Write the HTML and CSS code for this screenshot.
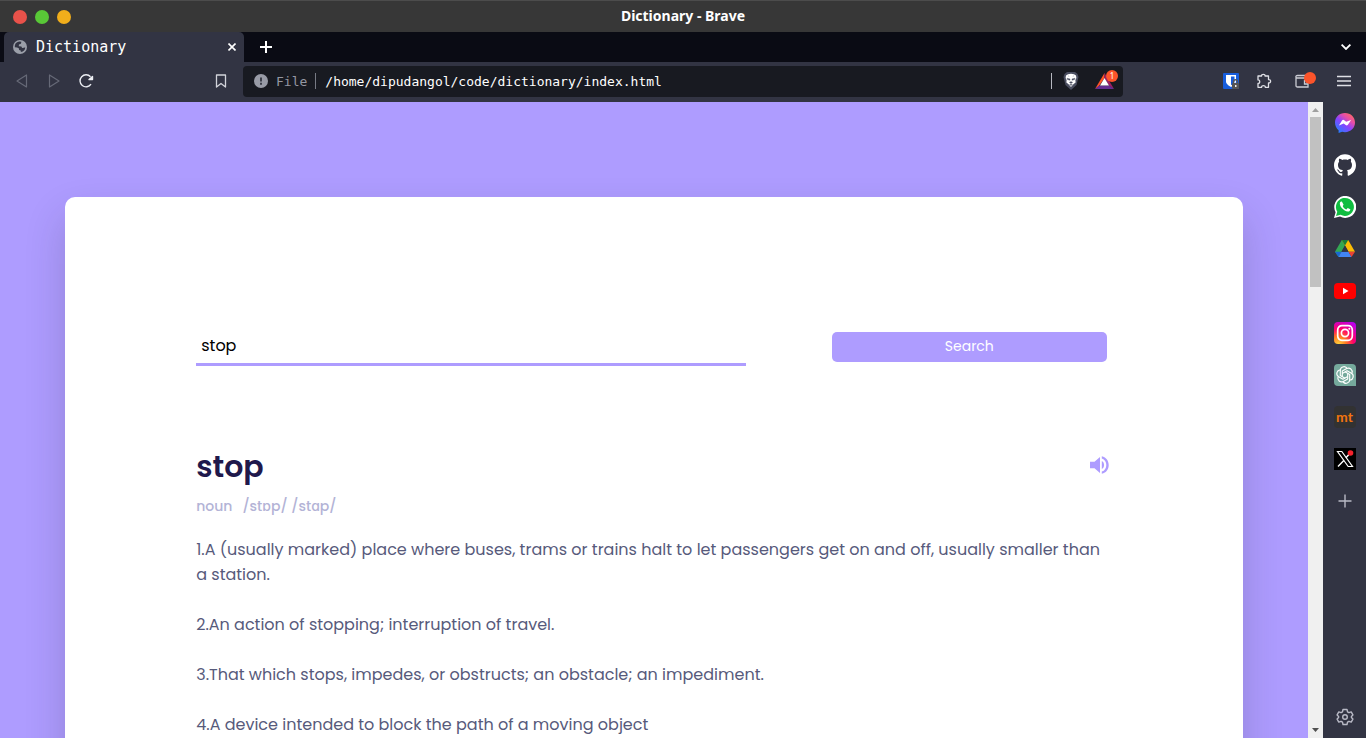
FILE: index.html
```html
<!DOCTYPE html>
<html lang="en">
<head>
<meta charset="utf-8">
<title>Dictionary</title>
<link rel="stylesheet" href="styles.css">
</head>
<body>
<header class="titlebar">
  <div class="lights">
    <button class="light light-red" aria-label="Close window"></button>
    <button class="light light-green" aria-label="Maximize window"></button>
    <button class="light light-amber" aria-label="Minimize window"></button>
  </div>
  <span class="window-title">Dictionary - Brave</span>
</header>

<div class="tabstrip">
  <div class="tab">
    <svg class="tab-icon" viewBox="0 0 16 16"><circle cx="8" cy="8" r="8" fill="#9b9fa9"/><path d="M7 1.8 9.6 2 9 4.2 6.8 5.2 6.6 7 9.6 7.4 10.4 9.2 12.6 8.8 14 8.2A6 6 0 0 1 9 13.8L8.8 12 7 11.4 6.6 9.4 4.6 8.6 2 8.2A6.200 6.200 0 0 1 7 1.800Z" fill="#323443"/></svg>
    <span class="tab-title">Dictionary</span>
    <button class="icon-button tab-close" aria-label="Close tab"><svg width="8" height="8" viewBox="0 0 8 8" fill="none" stroke="#fff" stroke-width="1.600"><path d="M.5.5l7 7M7.500.5l-7 7"/></svg></button>
  </div>
  <button class="icon-button new-tab" aria-label="New tab"><svg width="12" height="12" viewBox="0 0 12 12" stroke="#fff" stroke-width="2"><path d="M6 0v12M0 6h12"/></svg></button>
  <button class="icon-button tab-search" aria-label="Search tabs"><svg width="10" height="6" viewBox="0 0 10 6" fill="none" stroke="#fff" stroke-width="1.800"><path d="M.6.6 5 5 9.400.6"/></svg></button>
</div>

<nav class="toolbar">
  <div class="nav-group">
    <button class="icon-button" aria-label="Back"><svg width="12" height="14" viewBox="0 0 12 14" fill="none" stroke="#666977" stroke-width="1.200" stroke-linejoin="round"><path d="M10.500 1v12L1 7z"/></svg></button>
    <button class="icon-button" aria-label="Forward"><svg width="12" height="14" viewBox="0 0 12 14" fill="none" stroke="#666977" stroke-width="1.200" stroke-linejoin="round"><path d="M1.500 1v12L11 7z"/></svg></button>
    <button class="icon-button" aria-label="Reload"><svg width="16" height="16" viewBox="0 0 16 16" fill="none" stroke="#eceef3" stroke-width="1.400"><path d="M12.500 3.800A6 6 0 1 0 13 11.200"/><path d="M11 6.500h3.500V3.500z" fill="#eceef3" stroke-linejoin="round"/></svg></button>
  </div>
  <button class="icon-button bookmark" aria-label="Bookmark this page"><svg width="12" height="14" viewBox="0 0 12 14" fill="none" stroke="#d2d3da" stroke-width="1.300" stroke-linejoin="round"><path d="M1.500 1h9v12L6 9.500 1.500 13z"/></svg></button>
  <div class="omnibox">
    <svg width="14" height="14" viewBox="0 0 14 14"><circle cx="7" cy="7" r="7" fill="#989ba6"/><path d="M6 3.500h2v4H6zM6 8.800h2v2H6z" fill="#3b3e49"/></svg>
    <span class="scheme">File</span>
    <span class="divider scheme-divider"></span>
    <input class="address" type="text" aria-label="Address" value="/home/dipudangol/code/dictionary/index.html">
    <span class="divider"></span>
    <button class="icon-button shield" aria-label="Shields"><svg width="16" height="18" viewBox="0 0 16 18"><path d="M4 0h8l2.500 2L15.500 5 13.500 13 8 18 2.500 13 .5 5 1.500 2z" fill="#4a4e60"/><path d="M5 2.200 8 1.800l3 .4 2 1.400.4 2.400-1 2 .2 2.400-2.200 1.800L8 15l-2.400-2.800-2.200-1.800.2-2.400-1-2L3 3.600z" fill="#fff"/><path d="M4 6.200l3 .7v1.300L4.500 7.600zM12 6.200l-3 .7v1.300l2.500-.6zM6.400 10.400 8 9.600l1.600.8L8 11.600zM5.200 3.900l1 .5M10.800 3.900l-1 .5M6.600 12.500h2.800L8 13.600z" fill="#4a4e60" stroke="#4a4e60" stroke-width=".4"/></svg></button>
    <button class="icon-button rewards" aria-label="Rewards"><svg width="20" height="16" viewBox="0 0 20 16"><path d="M9.500 0 0 16 4 13 9.500 5z" fill="#ff5226"/><path d="M9.500 0 19 16 14 12.500 9.500 5z" fill="#9e1f63"/><path d="M0 16h19l-4.500-3.500H4.300z" fill="#662d91"/><path d="M9.500 5 14 12.500H5z" fill="#fff"/></svg><span class="badge">1</span></button>
  </div>
  <div class="extensions">
    <button class="icon-button" aria-label="Bitwarden"><svg width="16" height="16" viewBox="0 0 16 16"><rect width="16" height="16" rx="1" fill="#175ddc"/><path d="M3 2h10v6.500c0 2.500-3 4.400-5 5.500-2-1.100-5-3-5-5.500z" fill="#fff"/><path d="M8 3.500h3.500v5c0 1.500-1.500 2.700-3.500 3.800z" fill="#175ddc"/><rect x="9" y="10" width="7" height="6" rx="1" fill="#555"/><path d="M10.500 10V8.800a2 2 0 0 1 4 0V10" fill="none" stroke="#555" stroke-width="1.400"/><path d="M12 12h1.500v2H12z" fill="#eee"/></svg></button>
    <button class="icon-button" aria-label="Extensions"><svg width="16" height="16" viewBox="0 0 16 16" fill="none" stroke="#dfe0e6" stroke-width="1.300" stroke-linejoin="round"><path d="M2 3h3.600C5 .8 9.600.8 9 3h3.500v3.600c2.800-.6 2.800 3.800 0 3.300V14.300H9.300C9.600 12 5.300 12 5.600 14.300H2V10.500c2.300.3 2.300-4 0-3.700z"/></svg></button>
    <button class="icon-button wallet" aria-label="Wallet"><svg width="16" height="14" viewBox="0 0 16 14" fill="none" stroke="#cbccd4" stroke-width="1.300"><path d="M12 1.500H2.500C0 1.500.700 4 2.500 4H13v9H2.500Q1 13 1 11.500v-9M13 6.500H9.500v3.500H13"/></svg><span class="dot"></span></button>
    <button class="icon-button" aria-label="Menu"><svg width="14" height="12" viewBox="0 0 14 12" stroke="#dfe0e6" stroke-width="1.400"><path d="M0 1.500h14M0 6h14M0 10.500h14"/></svg></button>
  </div>
</nav>

<div class="workspace">
  <main class="page">
    <section class="card">
      <form class="search">
        <input class="word-input" type="text" aria-label="Word" value="stop">
        <button class="search-button" type="button">Search</button>
      </form>
      <div class="word-row">
        <h1 class="word">stop</h1>
        <button class="icon-button speaker" aria-label="Play pronunciation"><svg width="20" height="18" viewBox="0 0 20 18" fill="#ae9cff"><path d="M0 5.800h4.500L10 1v16l-5.500-4.800H0z"/><path d="M11.800 5c3 1.300 3 6.700 0 8z"/><path d="M11.800.2c9.200 1.800 9.200 15.800 0 17.600v-2.200c6-1.600 6-11.600 0-13.200z"/></svg></button>
      </div>
      <div class="details"><span>noun</span><span>/stɒp/ /stɑp/</span></div>
      <div class="meanings">
        <p>1.A (usually marked) place where buses, trams or trains halt to let passengers get on and off, usually smaller than a station.</p>
        <p>2.An action of stopping; interruption of travel.</p>
        <p>3.That which stops, impedes, or obstructs; an obstacle; an impediment.</p>
        <p>4.A device intended to block the path of a moving object</p>
      </div>
    </section>
  </main>
  <div class="scrollbar">
    <svg width="7" height="4" viewBox="0 0 7 4"><path d="M0 4 3.500 0 7 4z" fill="#a0a0a0"/></svg>
    <div class="track"><div class="thumb"></div></div>
    <svg width="7" height="4" viewBox="0 0 7 4"><path d="M0 0h7L3.500 4z" fill="#505050"/></svg>
  </div>
  <aside class="sidebar">
    <button class="icon-button side-item" aria-label="Messenger"><svg viewBox="0 0 22 22"><defs><linearGradient id="ms" x1="0" y1="1" x2=".8" y2="0"><stop offset="0" stop-color="#0a8fff"/><stop offset=".5" stop-color="#8a42ff"/><stop offset=".75" stop-color="#e64ea8"/><stop offset="1" stop-color="#ff6a60"/></linearGradient></defs><path d="M11 1c5.800 0 10 4.200 10 9.600s-4.200 9.600-10 9.600c-1 0-2-.1-2.900-.4L4.600 21V18.200C2.300 16.500 1 13.800 1 10.600 1 5.200 5.200 1 11 1z" fill="url(#ms)"/><path d="M4.900 13.400 8 8.600q.9-1.300 2.200-.4l2 1.600 4.900-1.900-3.200 4.800q-.9 1.300-2.200.4l-2-1.500z" fill="#fff"/></svg></button>
    <button class="icon-button side-item" aria-label="GitHub"><svg viewBox="0 0 24 24" fill="#fff"><path d="M12 .297c-6.630 0-12 5.373-12 12 0 5.303 3.438 9.800 8.205 11.385.6.113.82-.258.82-.577 0-.285-.010-1.040-.015-2.040-3.338.724-4.042-1.610-4.042-1.610C4.422 18.070 3.633 17.700 3.633 17.700c-1.087-.744.084-.729.084-.729 1.205.084 1.838 1.236 1.838 1.236 1.070 1.835 2.809 1.305 3.495.998.108-.776.417-1.305.76-1.605-2.665-.3-5.466-1.332-5.466-5.930 0-1.310.465-2.380 1.235-3.220-.135-.303-.54-1.523.105-3.176 0 0 1.005-.322 3.300 1.230.96-.267 1.980-.399 3-.405 1.020.006 2.040.138 3 .405 2.280-1.552 3.285-1.230 3.285-1.230.645 1.653.24 2.873.12 3.176.765.84 1.230 1.910 1.230 3.220 0 4.610-2.805 5.625-5.475 5.920.42.36.81 1.096.81 2.220 0 1.606-.015 2.896-.015 3.286 0 .315.210.69.825.57C20.565 22.092 24 17.592 24 12.297c0-6.627-5.373-12-12-12"/></svg></button>
    <button class="icon-button side-item" aria-label="WhatsApp"><svg viewBox="0 0 22 22"><path d="M0 22 1.600 16.200A11 11 0 1 1 6 20.600z" fill="#fff"/><path d="M2 20 3.300 15.700A9 9 0 1 1 6.600 18.800z" fill="#10bd40"/><path d="M8 5.800c-.5-.6-1.200-.4-1.700.3-2.300 3.300 3.900 9.700 7.700 9.500 1.400-.1 2.500-1.200 2.300-2.400L13.700 12l-1.300 1.400c-1.700-.6-3-1.900-3.700-3.500L9.600 8.700z" fill="#fff"/></svg></button>
    <button class="icon-button side-item" aria-label="Google Drive"><svg viewBox="0 0 22 22"><path d="M7.800 2 11 7.600 4.500 19 1 13.700z" fill="#34a853"/><path d="M7.800 2h6.400L21 13.700h-6.500z" fill="#fbbc04"/><path d="M7.800 2h6.400L11 7.600z" fill="#188038"/><path d="M1 13.700h6.500L4.500 19z" fill="#1967d2"/><path d="M7.500 13.700h7L17.500 19h-13z" fill="#4285f4"/><path d="M14.500 13.700H21L17.500 19z" fill="#ea4335"/><path d="M11 7.600 14.500 13.700h-7z" fill="#323443"/></svg></button>
    <button class="icon-button side-item" aria-label="YouTube"><svg viewBox="0 0 22 22"><rect y="3" width="22" height="16" rx="4" fill="#f00"/><path d="M9 7.700v6.600l5.500-3.300z" fill="#fff"/></svg></button>
    <button class="icon-button side-item" aria-label="Instagram"><svg viewBox="0 0 22 22"><defs><radialGradient id="ig" cx=".2" cy="1" r="1.150"><stop offset="0" stop-color="#ffd33d"/><stop offset=".3" stop-color="#ff7a20"/><stop offset=".6" stop-color="#ff0169"/><stop offset="1" stop-color="#b900ee"/></radialGradient></defs><rect width="22" height="22" rx="4" fill="url(#ig)"/><g fill="none" stroke="#fff" stroke-width="1.700"><rect x="3.700" y="3.700" width="14.600" height="14.600" rx="4.200"/><circle cx="11" cy="11" r="3.600"/></g><circle cx="15.300" cy="6.700" r="1" fill="#fff"/></svg></button>
    <button class="icon-button side-item" aria-label="ChatGPT"><svg viewBox="0 0 22 22"><path d="M4 0h14q4 0 4 4v18H4q-4 0-4-4V4q0-4 4-4z" fill="#75a99c"/><g fill="none" stroke="#fff" stroke-width="1.150" stroke-linejoin="round"><path id="petal" d="M8.300 12.600V7.100l4.400-2.500c3-1.700 6.300 1.200 5.300 4.500"/><use href="#petal" transform="rotate(60 11 11)"/><use href="#petal" transform="rotate(120 11 11)"/><use href="#petal" transform="rotate(180 11 11)"/><use href="#petal" transform="rotate(240 11 11)"/><use href="#petal" transform="rotate(300 11 11)"/></g></svg></button>
    <button class="icon-button side-item monkeytype" aria-label="Monkeytype">mt</button>
    <button class="icon-button side-item" aria-label="X"><svg viewBox="0 0 22 22"><path d="M0 0h22v22H0z"/><path d="M3.500 3.500h4.300l10.700 15h-4.300z" fill="none" stroke="#fff" stroke-width="1.200"/><path d="M17.500 3.500 12 9.700M9.800 12.500 4 18.500" stroke="#fff" stroke-width="1.400"/><circle cx="16.500" cy="5" r="2.800" fill="#f5222d"/></svg></button>
    <button class="icon-button side-item" aria-label="Add to sidebar"><svg viewBox="0 0 22 22" stroke="#b9bac6" stroke-width="1.400"><path d="M11 4.500v13M4.500 11h13"/></svg></button>
    <button class="icon-button side-item settings" aria-label="Settings"><svg viewBox="0 0 22 22" fill="none" stroke="#b9bac6" stroke-width="1.400" stroke-linejoin="round"><path d="M9 3.500h4l.5 2.300 1.500.9 2.200-.8 1.700 3-1.500 1.500v1.200l1.500 1.500-1.700 3-2.200-.8-1.500.9-.5 2.300H9l-.5-2.300-1.500-.9-2.200.8-1.700-3 1.500-1.500v-1.200L3.100 8.900l1.700-3 2.200.8 1.500-.9z"/><circle cx="11" cy="11" r="2.300"/></svg></button>
  </aside>
</div>
</body>
</html>
```
FILE: styles.css
```css
* { box-sizing: border-box; }
body {
  margin: 0;
  height: 100vh;
  display: flex;
  flex-direction: column;
  overflow: hidden;
  background: #323443;
  color: #fff;
  font-family: "Noto Sans", sans-serif;
}
svg { display: block; flex: none; }
button, input { font: inherit; border: 0; padding: 0; margin: 0; }
.icon-button {
  display: flex;
  align-items: center;
  justify-content: center;
  background: none;
  color: inherit;
}

.titlebar {
  flex: none;
  height: 32px;
  display: grid;
  grid-template-columns: 1fr auto 1fr;
  align-items: center;
  padding: 0 13px;
  background: #373737;
  border-top: 1px solid #4c4c4c;
}
.lights { display: flex; gap: 8px; }
.light { width: 14px; height: 14px; border-radius: 50%; }
.light-red { background: #e9524a; }
.light-green { background: #59c837; }
.light-amber { background: #f1ae1b; }
.window-title { padding-bottom: 2px; font-size: 14px; line-height: 18px; font-weight: 700; }

.tabstrip {
  flex: none;
  height: 30px;
  display: flex;
  padding: 0 15px 0 4px;
  background: #0a0b14;
}
.tab {
  width: 240px;
  display: flex;
  align-items: center;
  gap: 9px;
  padding: 0 8px 0 9px;
  background: #323443;
  border-radius: 5px 5px 0 0;
}
.tab-icon { width: 14px; height: 14px; }
.tab-title { flex: 1; font-family: "DejaVu Sans Mono", monospace; font-size: 15px; line-height: 20px; }
.new-tab { margin-left: 16px; }
.tab-search { margin-left: auto; }

.toolbar {
  flex: none;
  height: 40px;
  display: flex;
  align-items: center;
  padding: 0 15px 2px 14px;
  background: #323443;
}
.nav-group { display: flex; gap: 16px; }
.nav-group .icon-button { width: 16px; }
.bookmark { margin-left: 121px; }
.omnibox {
  flex: 0 1 880px;
  min-width: 0;
  height: 31px;
  display: flex;
  align-items: center;
  gap: 8px;
  margin-left: 16px;
  padding: 0 4px 0 11px;
  background: #181a21;
  border-radius: 4px;
  font-family: "DejaVu Sans Mono", monospace;
  font-size: 13px;
}
.scheme { color: #9497a2; }
.divider { width: 1px; height: 16px; background: #b6b8c0; }
.scheme-divider { background: #777a84; }
.address {
  flex: 1;
  min-width: 0;
  margin-left: 1px;
  background: none;
  color: #fff;
}
.shield { margin-left: 3px; }
.rewards { position: relative; width: 24px; margin-left: 8px; justify-content: flex-start; }
.badge {
  position: absolute;
  top: -3px;
  right: 1px;
  width: 12px;
  height: 12px;
  border-radius: 50%;
  background: #fb542b;
  font-family: "Noto Sans", sans-serif;
  font-size: 8px;
  line-height: 12px;
}
.extensions {
  display: flex;
  align-items: center;
  gap: 17px;
  margin-left: auto;
}
.wallet { position: relative; width: 22px; margin: 0 3px 0 6px; justify-content: flex-start; }
.dot {
  position: absolute;
  top: -2px;
  right: 1px;
  width: 12px;
  height: 12px;
  border-radius: 50%;
  background: #fb542b;
}

.workspace { flex: 1; min-height: 0; display: flex; }
.page {
  flex: 1;
  min-width: 0;
  overflow: hidden;
  padding-top: 95px;
  background: #ae9cff;
  font-family: Poppins, Inter, sans-serif;
}
.card {
  width: 90%;
  min-height: 100%;
  margin: 0 auto;
  padding: 135px 10% 60px;
  background: #fff;
  border-radius: 10px;
  box-shadow: 0 20px 40px rgba(38, 33, 61, 0.2);
}
.search {
  display: flex;
  align-items: flex-start;
  justify-content: space-between;
  padding-right: 5px;
}
.word-input {
  flex: 0 1 550px;
  min-width: 0;
  height: 34px;
  padding: 0 5px 5px;
  border-bottom: 3px solid #ae9cff;
  color: #000;
  font-size: 16px;
}
.search-button {
  flex: 0 1 275px;
  height: 30px;
  padding-bottom: 2px;
  background: #ae9cff;
  border-radius: 5px;
  color: #fff;
  font-size: 14px;
}
.word-row {
  display: flex;
  align-items: flex-start;
  justify-content: space-between;
  margin-top: 76px;
  padding-right: 2px;
}
.word { margin: 0; color: #1f194c; font-size: 30px; line-height: 50px; font-weight: 600; }
.speaker { padding-top: 14px; }
.details {
  display: flex;
  gap: 10px;
  margin-top: 3px;
  color: #b3b3d6;
  font-size: 14px;
  line-height: 22px;
  font-weight: 500;
}
.meanings { margin-top: 20px; color: #575a7b; font-size: 16px; line-height: 25px; }
.meanings p { margin: 0 0 25px; }

.scrollbar {
  flex: none;
  width: 15px;
  display: flex;
  flex-direction: column;
  align-items: center;
  gap: 5px;
  padding: 6px 0;
  background: #f0f0f0;
}
.track { flex: 1; width: 11px; }
.thumb { height: 28%; background: #c1c1c1; }

.sidebar {
  flex: none;
  width: 43px;
  display: flex;
  flex-direction: column;
  align-items: center;
  gap: 20px;
  padding: 10px 0;
  background: #323443;
}
.side-item { width: 22px; height: 22px; }
.side-item svg { width: 22px; height: 22px; }
.monkeytype {
  background: #323232;
  border-radius: 4px;
  color: #f1740e;
  font-family: Lato, sans-serif;
  font-size: 14px;
  line-height: 16px;
  font-weight: 700;
}
.settings { margin-top: auto; }
```
